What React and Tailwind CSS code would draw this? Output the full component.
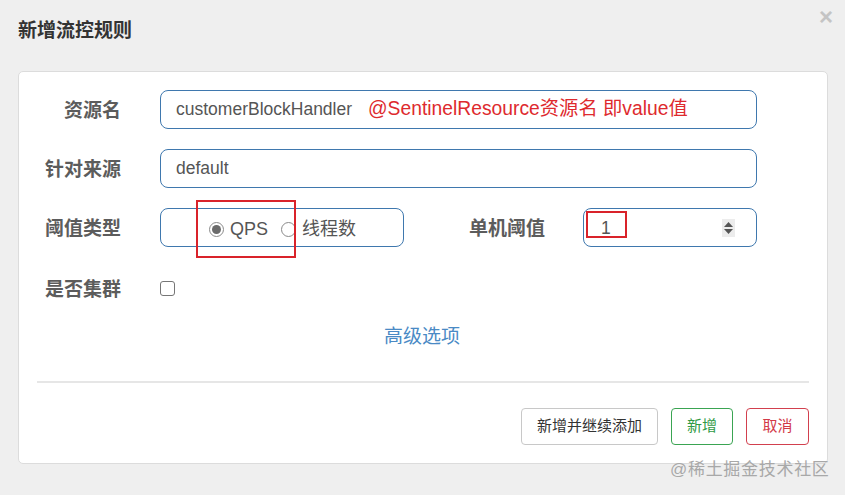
import React from 'react';

const font = { fontFamily: '"Liberation Sans", "Noto Sans CJK SC", sans-serif' };

const Label = ({ children, className = '' }) => (
  <div className={`text-right text-[19px] font-bold text-[#5c5c5c] pt-[4px] ${className}`}>{children}</div>
);

const Radio = ({ checked }) => (
  <span className="w-[15px] h-[15px] rounded-full border border-[#8a8a8a] bg-white flex items-center justify-center">
    {checked && <span className="w-[9px] h-[9px] rounded-full bg-[#6b6b6b]" />}
  </span>
);

export default function App() {
  return (
    <div
      className="relative w-[845px] h-[495px] bg-[#efefef] overflow-hidden"
      style={font}
    >
      {/* header */}
      <div className="flex items-center justify-between h-[62px] pl-[18px] pr-[12px]">
        <h2 className="text-[19px] font-bold text-[#333] mt-[1px]">新增流控规则</h2>
        <span className="self-start mt-[5px] text-[24px] font-bold leading-none text-[#c4c4c4]">×</span>
      </div>

      {/* panel */}
      <div className="ml-[18px] mt-[9px] w-[810px] h-[393px] bg-white border border-[#dcdcdc] rounded-[5px] pt-[18px]">
        {/* 资源名 */}
        <div className="flex items-center h-[39px]">
          <Label className="w-[102px]">资源名</Label>
          <div className="ml-[39px] w-[597px] h-[39px] border border-[#3f78ae] rounded-[8px] flex items-center px-[15px] text-[17.5px] text-[#555]">
            <span>customerBlockHandler</span>
            <span className="ml-[16px] text-[19.3px] text-[#de2a2e]">@SentinelResource资源名 即value值</span>
          </div>
        </div>

        {/* 针对来源 */}
        <div className="flex items-center h-[39px] mt-[20px]">
          <Label className="w-[102px]">针对来源</Label>
          <div className="ml-[39px] w-[597px] h-[39px] border border-[#3f78ae] rounded-[8px] flex items-center px-[15px] text-[17.5px] text-[#555]">
            default
          </div>
        </div>

        {/* 阈值类型 / 单机阈值 */}
        <div className="flex items-center h-[39px] mt-[20px]">
          <Label className="w-[102px]">阈值类型</Label>
          <div className="ml-[39px] w-[244px] h-[39px] border border-[#3f78ae] rounded-[8px] flex items-center pl-[48px] pt-[3px] text-[18px] text-[#555]">
            <Radio checked />
            <span className="ml-[6px]">QPS</span>
            <span className="ml-[13px]"><Radio /></span>
            <span className="ml-[6px]">线程数</span>
          </div>
          <Label className="w-[141px]">单机阈值</Label>
          <div className="ml-[38px] w-[174px] h-[39px] border border-[#3f78ae] rounded-[8px] flex items-center justify-between pl-[17px] pr-[21px] text-[17.5px] text-[#555]">
            <span className="pt-[2px]">1</span>
            <span className="w-[13px] h-[18px] bg-[#ececec] flex flex-col items-center justify-center gap-[2px]">
              <svg width="9" height="5" viewBox="0 0 9 5"><path d="M0 5 L4.5 0 L9 5 Z" fill="#555" /></svg>
              <svg width="9" height="5" viewBox="0 0 9 5"><path d="M0 0 L4.5 5 L9 0 Z" fill="#555" /></svg>
            </span>
          </div>
        </div>

        {/* 是否集群 */}
        <div className="flex items-center h-[39px] mt-[22px]">
          <Label className="w-[102px]">是否集群</Label>
          <span className="ml-[39px] w-[15px] h-[15px] border border-[#767676] rounded-[3px] bg-white" />
        </div>

        {/* 高级选项 */}
        <div className="mt-[15px] text-center pr-[2px] text-[19px] leading-[28px] text-[#4a8ac5]">高级选项</div>

        <div className="ml-[18px] mt-[30px] w-[772px] h-[2px] bg-[#e6e6e6]" />

        <div className="flex justify-end gap-[13px] mt-[25px] pr-[18px] text-[15px]">
          <button className="h-[37px] w-[137px] border border-[#c8c8c8] rounded-[4px] text-[#333] bg-white">新增并继续添加</button>
          <button className="h-[37px] w-[62px] border border-[#3aa452] rounded-[4px] text-[#2f9a46] bg-white">新增</button>
          <button className="h-[37px] w-[63px] border border-[#d2404e] rounded-[4px] text-[#d23a48] bg-white">取消</button>
        </div>
      </div>

      {/* annotation boxes */}
      <div className="absolute left-[196px] top-[200px] w-[100px] h-[58px] border-2 border-[#d9232a]" />
      <div className="absolute left-[586px] top-[211px] w-[41px] h-[27px] border-2 border-[#d9232a]" />

      {/* watermark */}
      <div className="absolute left-[670px] top-[457px] text-[17px] text-[#a8a8a8] tracking-[0.7px]">@稀土掘金技术社区</div>
    </div>
  );
}
